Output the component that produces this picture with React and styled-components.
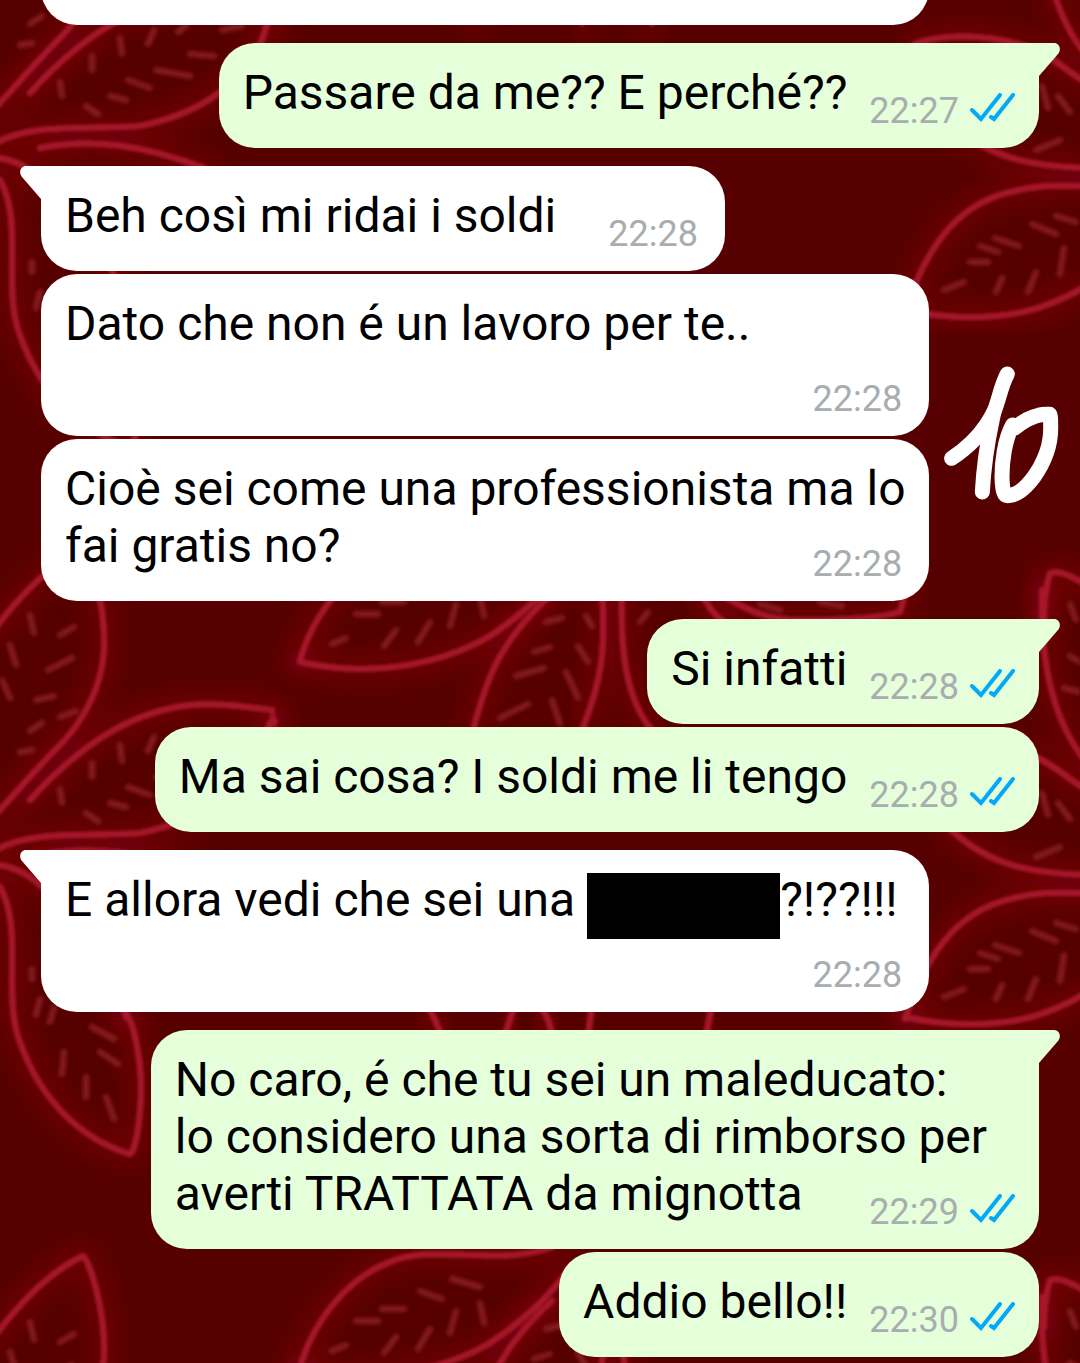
import styled, { createGlobalStyle } from "styled-components"

// the last line shares its row with the time
const messages = [
    { id: 1, blank: true },
    { id: 2, mine: true, first: true, last: "Passare da me?? E perché??", time: "22:27" },
    { id: 3, first: true, last: "Beh così mi ridai i soldi", time: "22:28" },
    { id: 4, wide: true, lines: ["Dato che non é un lavoro per te.."], time: "22:28" },
    { id: 5, wide: true, lines: ["Cioè sei come una professionista ma lo"], last: "fai gratis no?", time: "22:28", doodle: true },
    { id: 6, mine: true, first: true, last: "Si infatti", time: "22:28" },
    { id: 7, mine: true, last: "Ma sai cosa? I soldi me li tengo", time: "22:28" },
    { id: 8, first: true, wide: true, lines: ["E allora vedi che sei una "], censored: "?!??!!!", time: "22:28" },
    { id: 9, mine: true, first: true, wide: true, lines: ["No caro, é che tu sei un maleducato:", "lo considero una sorta di rimborso per"], last: "averti TRATTATA da mignotta", time: "22:29" },
    { id: 10, mine: true, last: "Addio bello!!", time: "22:30" },
];

// outlines of the leaves, one tile is 1080 x 707
const leaves = [
    "M-6 144 C30 122 90 130 140 126 C190 116 240 90 262 40 C268 22 270 10 275 14",
    "M40 148 C90 138 140 144 204 168",
    "M-6 158 C10 158 24 164 40 178 C80 200 112 260 126 310",
    "M0 180 C24 222 2 290 20 335 C40 392 80 432 130 447 C136 446 146 390 138 345 C134 320 130 312 124 302",
    "M-6 630 C24 590 55 562 83 549 C88 552 106 600 104 650 C102 690 80 725 60 745 C30 775 10 800 -6 816",
    "M30 800 C80 745 130 712 190 705 C220 702 252 708 272 710 L274 728",
    "M300 660 C315 610 350 570 390 555 C430 536 500 560 552 540",
    "M300 662 C370 678 440 665 490 636 C520 616 550 590 570 560",
    "M552 594 C500 640 486 680 474 727",
    "M602 590 C606 650 602 680 582 730",
    "M622 590 C620 650 626 700 652 730",
    "M700 590 C710 612 720 620 730 626",
    "M724 596 C750 612 770 620 800 620 C840 620 880 618 900 612 L906 590",
    "M425 295 C434 308 438 320 442 330",
    "M514 300 L506 325",
    "M540 300 C548 308 550 318 552 328",
    "M592 300 L588 328",
    "M712 298 L706 328",
    "M915 44 C945 32 1000 34 1040 52 C1060 62 1070 74 1086 82",
    "M1042 590 C1040 660 1052 720 1086 762",
    "M950 122 C985 154 1020 166 1086 168",
    "M905 312 C925 250 955 205 1010 192 C1040 184 1060 186 1086 186",
    "M905 310 C960 322 1010 318 1044 306 C1060 300 1070 296 1086 286",
    "M1044 620 C1044 600 1046 586 1050 573 C1060 570 1070 576 1086 584",
];

// short veins: x, y, dx, dy
const veins = [
    [30, 24, 12, -8], [60, 10, 16, -6], [120, 38, 2, 16], [154, 30, -6, 14], [178, 32, 8, -6],
    [92, 56, 0, 14], [128, 80, 22, 8], [156, 70, 34, 6], [190, 54, 24, 2], [60, 82, 2, 14],
    [110, 96, 16, 4], [86, 106, 12, 8], [222, 30, 20, -4], [32, 262, 0, 10], [50, 315, 4, -14],
    [64, 345, -2, 22], [92, 320, 22, 12], [100, 345, 18, 12], [86, 370, 0, 20], [106, 390, 8, 22],
    [40, 292, -4, 16], [10, 645, 6, 20], [30, 615, 4, 18], [60, 635, 14, -8], [48, 670, 24, -12],
    [2, 680, 8, 18], [36, 700, 18, -4], [20, 752, 12, -2],
    [356, 614, 22, 0], [332, 644, 14, -6], [384, 646, 12, -16], [418, 642, 12, -20], [450, 626, 6, -22],
    [484, 616, -4, -20], [420, 584, 22, 8], [452, 572, 28, 8], [382, 602, 22, 0],
    [516, 676, 28, -8], [534, 652, 16, -5], [500, 718, 28, -14], [566, 672, 12, 26], [552, 700, 8, 24],
    [578, 646, 10, 16], [546, 622, 16, -4], [586, 616, 6, 10], [640, 622, 8, -10],
    [1042, 86, 6, 22], [1058, 96, 12, 16], [1036, 150, 24, -10],
    [995, 238, 24, 8], [1032, 224, 24, 10], [1056, 216, 20, 6], [970, 262, 18, 0],
    [944, 290, 20, -8], [996, 292, 6, -14], [1028, 292, 8, -20], [1060, 274, 4, -26], [980, 246, 18, 6],
    [1070, 604, 6, 16], [1064, 688, 16, 4], [1070, 656, 10, 6], [760, 604, 20, 6], [820, 602, 22, 4],
];

function Leaves() {
    return (
        <>
            {leaves.map(d => <path key={d} d={d} stroke="#8a0008" strokeWidth="30" opacity="0.4" filter="url(#glow)" />)}
            {leaves.map(d => <path key={d} d={d} stroke="#a8182a" strokeWidth="6" />)}
            <g stroke="#8c1a20" strokeWidth="6" opacity="0.9" filter="url(#vein)">
                {veins.map(([x, y, dx, dy]) => <path key={x + "-" + y} d={`M${x} ${y}l${dx} ${dy}`} />)}
            </g>
        </>
    )
}

function Wallpaper() {
    return (
        <Backdrop aria-hidden="true">
            <defs>
                <filter id="glow" x="-50%" y="-50%" width="200%" height="200%"><feGaussianBlur stdDeviation="11" /></filter>
                <filter id="vein" filterUnits="userSpaceOnUse" x="0" y="0" width="1080" height="760"><feGaussianBlur stdDeviation="1.5" /></filter>
                <filter id="soft" filterUnits="userSpaceOnUse" x="0" y="0" width="1080" height="2121"><feGaussianBlur stdDeviation="1.5" /></filter>
                <g id="leaves" fill="none" strokeLinecap="round" strokeLinejoin="round"><Leaves /></g>
            </defs>
            <g filter="url(#soft)">
                <use href="#leaves" y="-707" />
                <use href="#leaves" />
                <use href="#leaves" y="707" />
            </g>
        </Backdrop>
    )
}

function Ticks() {
    return (
        <TickIcon viewBox="0 0 45 30" role="img" aria-label="Letto">
            <path d="M2 17L11 26L30 2M21 24L24 26L43 2" />
        </TickIcon>
    )
}

function Ten() {
    return (
        <Doodle viewBox="65 75 354 420" role="img" aria-label="10">
            <path d="M94 355C150 318 196 266 221 215C236 180 242 136 261 102" />
            <path d="M221 215C204 290 190 380 186 456" />
            <path d="M277 255C252 300 245 370 245 410C246 450 250 467 262 467C285 467 310 452 340 412C374 364 393 316 391 258C391 240 391 226 388 223C350 221 318 234 284 264" />
        </Doodle>
    )
}

export default function App() {
    return (
        <Chat>
            <GlobalStyle />
            <Wallpaper />
            {messages.map(m => (
                <Row key={m.id} $mine={m.mine} $first={m.first}>
                    <Bubble $mine={m.mine} $first={m.first} $wide={m.wide || m.blank}>
                        {m.first && (
                            <Tail $mine={m.mine} viewBox="0 0 22 34" aria-hidden="true">
                                <path d="M22 0H6C1 0 -2 6 2 11L21 33H22Z" />
                            </Tail>
                        )}
                        {m.lines && m.lines.map(line => (
                            <Line key={line}>{line}{m.censored && <><Censored />{m.censored}</>}</Line>
                        ))}
                        {m.time && (
                            <LastRow>
                                {m.last && <LastLine>{m.last}</LastLine>}
                                <Meta $mine={m.mine}>
                                    <time>{m.time}</time>
                                    {m.mine && <Ticks />}
                                </Meta>
                            </LastRow>
                        )}
                    </Bubble>
                    {m.doodle && <Ten />}
                </Row>
            ))}
        </Chat>
    )
};

const GlobalStyle = createGlobalStyle`
    body{
        margin:0;
        background-color:#560001;
        font-family:Roboto, "Liberation Sans", sans-serif;
    }
`;

const Chat = styled.main`
    position:relative;
    display:flex;
    flex-direction:column;
    justify-content:flex-end;
    height:100vh;
    padding:0 41px 6px;
    box-sizing:border-box;
    overflow:hidden;
`;

const Backdrop = styled.svg`
    position:absolute;
    top:0;
    left:0;
    width:100%;
    height:100%;
`;

const Row = styled.div`
    position:relative;
    display:flex;
    flex-shrink:0;
    justify-content:${props => props.$mine ? "flex-end" : "flex-start"};
    margin-top:${props => props.$first ? "18px" : "3px"};
`;

const Bubble = styled.div`
    position:relative;
    width:${props => props.$wide ? "89%" : "auto"};
    min-height:105px;
    padding:21px 20px 16px 24px;
    box-sizing:border-box;
    border-radius:36px;
    border-top-left-radius:${props => props.$first && !props.$mine ? "0" : "36px"};
    border-top-right-radius:${props => props.$first && props.$mine ? "0" : "36px"};
    background-color:${props => props.$mine ? "#e5ffdb" : "#fff"};
`;

const Tail = styled.svg`
    position:absolute;
    top:0;
    ${props => props.$mine ? "right:-21px" : "left:-21px"};
    width:22px;
    height:34px;
    fill:${props => props.$mine ? "#e5ffdb" : "#fff"};
    transform:${props => props.$mine ? "scaleX(-1)" : "none"};
`;

const Line = styled.div`
    font-size:48px;
    line-height:57px;
    color:#000;
`;

const LastRow = styled.div`
    display:flex;
    align-items:flex-end;
    height:68px;
    margin-top:auto;
`;

const LastLine = styled(Line)`
    padding-bottom:11px;
`;

// bar painted over a word
const Censored = styled.span`
    display:inline-block;
    width:193px;
    height:66px;
    margin:2px 0 -12px;
    vertical-align:top;
    background-color:#000;
`;

const Meta = styled.span`
    display:flex;
    align-items:center;
    gap:11px;
    margin-left:auto;
    margin-right:${props => props.$mine ? "4px" : "7px"};
    padding-left:${props => props.$mine ? "22px" : "52px"};
    font-size:36px;
    line-height:42px;
    color:#a8adaf;
`;

const TickIcon = styled.svg`
    width:45px;
    height:30px;
    margin-bottom:6px;
    fill:none;
    stroke:#03a9f9;
    stroke-width:4;
    stroke-linecap:round;
`;

const Doodle = styled.svg`
    position:absolute;
    top:-74px;
    right:-21px;
    width:118px;
    height:140px;
    fill:none;
    stroke:#fff;
    stroke-width:45;
    stroke-linecap:round;
    stroke-linejoin:round;
`;
